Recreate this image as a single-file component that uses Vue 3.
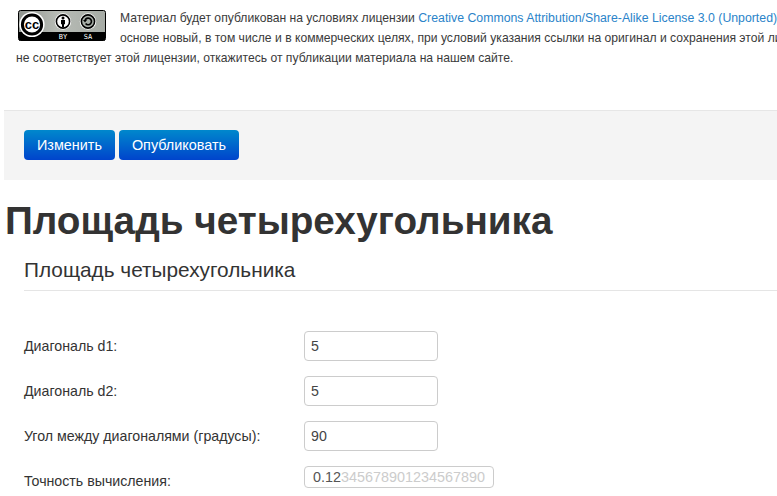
<script setup>
const rows = [
  { label: 'Диагональ d1:', value: '5' },
  { label: 'Диагональ d2:', value: '5' },
  { label: 'Угол между диагоналями (градусы):', value: '90' },
]
</script>

<template>
  <div class="page">
    <div class="license">
      <svg class="cc" width="88" height="31" viewBox="0 0 88 31">
        <defs>
          <linearGradient id="ccbg" x1="0" x2="1" y1="0" y2="0">
            <stop offset="0" stop-color="#8f948f" />
            <stop offset="0.45" stop-color="#b8bcb6" />
            <stop offset="1" stop-color="#a6aba5" />
          </linearGradient>
        </defs>
        <rect x="0.5" y="0.5" width="87" height="30" rx="2" fill="url(#ccbg)" stroke="#000" />
        <rect x="1" y="22" width="86" height="8.5" fill="#000" />
        <circle cx="14" cy="14.5" r="12.6" fill="#fff" />
        <circle cx="14" cy="14.5" r="9.6" fill="#fff" stroke="#000" stroke-width="3" />
        <text x="14" y="18.5" text-anchor="middle" class="cct">cc</text>
        <circle cx="45" cy="11.5" r="8.2" fill="#fff" />
        <circle cx="45" cy="11.5" r="6.6" fill="#fff" stroke="#000" stroke-width="1.6" />
        <circle cx="45" cy="7.9" r="1.5" fill="#000" />
        <path d="M43 10h4v4.2h-1v3h-2v-3h-1z" fill="#000" />
        <circle cx="70" cy="11.5" r="8.2" fill="#fff" />
        <circle cx="70" cy="11.5" r="6.6" fill="#aab0aa" stroke="#000" stroke-width="1.6" />
        <path d="M67 10.5a3.3 3.3 0 1 1 .6 3" fill="none" stroke="#000" stroke-width="1.7" />
        <path d="M65 10h4l-2 2.4z" fill="#000" />
        <text x="45" y="29" text-anchor="middle" class="bys">BY</text>
        <text x="70" y="29" text-anchor="middle" class="bys">SA</text>
      </svg>
      <p class="line first">Материал будет опубликован на условиях лицензии <a>Creative Commons Attribution/Share-Alike License 3.0 (Unported)</a></p>
      <p class="line first">основе новый, в том числе и в коммерческих целях, при условий указания ссылки на оригинал и сохранения этой лицензии</p>
      <p class="line last">не соответствует этой лицензии, откажитесь от публикации материала на нашем сайте.</p>
    </div>

    <div class="panel">
      <button class="btn">Изменить</button>
      <button class="btn">Опубликовать</button>
    </div>

    <h1>Площадь четырехугольника</h1>

    <div class="content">
      <h2>Площадь четырехугольника</h2>
      <form class="form" @submit.prevent>
        <div v-for="r in rows" :key="r.label" class="row">
          <label>{{ r.label }}</label>
          <div class="input">{{ r.value }}</div>
        </div>
        <div class="row small">
          <label class="low">Точность вычисления:</label>
          <div class="input precision"><span>0.12</span><span class="muted">345678901234567890</span></div>
        </div>
      </form>
    </div>
  </div>
</template>

<style>
html, body { margin: 0; background: #fff; overflow: hidden; }
</style>

<style scoped>
.page {
  width: 777px;
  height: 496px;
  overflow: hidden;
  font-family: "Liberation Sans", Arial, sans-serif;
  color: #333;
  background: #fff;
}
.license {
  position: relative;
  height: 110px;
  padding-top: 8px;
  box-sizing: border-box;
  font-size: 12.15px;
  line-height: 20px;
  color: #3a3a3a;
}
.cc { position: absolute; left: 18px; top: 10px; }
.cct { font: bold 13px "Liberation Sans", sans-serif; fill: #000; }
.bys { font: 7px "DejaVu Sans Mono", monospace; fill: #fff; }
.line { margin: 0; white-space: nowrap; }
.first { margin-left: 120px; }
.last { margin-left: 16px; }
a { color: #2a83c9; font-size: 12.3px; }
.panel {
  margin-left: 4px;
  height: 70px;
  box-sizing: border-box;
  border-top: 1px solid #e6e6e6;
  background: #f4f4f4;
  padding: 19px 20px;
  display: flex;
  gap: 4px;
}
.btn {
  height: 30px;
  padding: 0 13px;
  border: 0;
  border-radius: 4px;
  background: linear-gradient(#0088cc, #0044cc);
  color: #fff;
  font: 14.4px "Liberation Sans", sans-serif;
}
h1 {
  margin: 18px 0 0 5px;
  font-size: 38.7px;
  line-height: 46px;
  font-weight: bold;
  white-space: nowrap;
}
.content { margin-left: 24px; }
h2 {
  margin: 15px 0 0;
  height: 32px;
  box-sizing: border-box;
  border-bottom: 1px solid #e5e5e5;
  font-size: 20.8px;
  font-weight: normal;
  line-height: 22px;
}
.form { padding-top: 40px; display: flex; flex-direction: column; gap: 15px; }
.row { display: flex; align-items: center; height: 30px; }
.row label { width: 280px; font-size: 14.2px; flex: none; }
.row label.low { padding-top: 8px; }
.input {
  width: 134px;
  height: 30px;
  box-sizing: border-box;
  border: 1px solid #ccc;
  border-radius: 4px;
  padding: 0 6px;
  font-size: 14.2px;
  line-height: 28px;
  color: #444;
}
.row.small { height: 22px; }
.precision {
  width: 190px;
  height: 22px;
  padding: 0 8px;
  line-height: 20px;
  white-space: nowrap;
  font-size: 14.4px;
  color: #555;
}
.muted { color: #ccc; }
</style>
